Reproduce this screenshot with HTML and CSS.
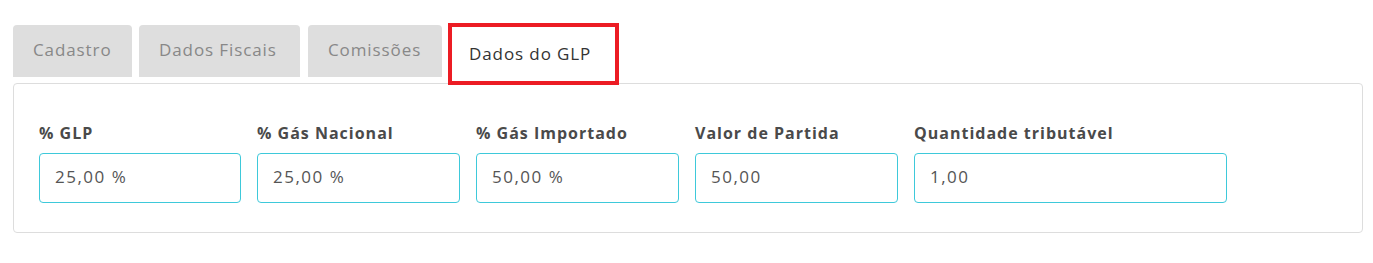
FILE: index.html
```html
<!DOCTYPE html>
<html lang="pt-BR">
<head>
  <meta charset="UTF-8" />
  <title>Dados do GLP</title>
  <link rel="stylesheet" href="styles.css">
</head>
<body>
  <div class="tabs">
    <div class="tab">Cadastro</div>
    <div class="tab">Dados Fiscais</div>
    <div class="tab">Comissões</div>
    <div class="tab active">Dados do GLP</div>
  </div>
  <div class="panel">
    <div class="field first">
      <label>% GLP</label>
      <input class="field-input" type="text" value="25,00 %">
    </div>
    <div class="field">
      <label>% Gás Nacional</label>
      <input class="field-input" type="text" value="25,00 %">
    </div>
    <div class="field">
      <label>% Gás Importado</label>
      <input class="field-input" type="text" value="50,00 %">
    </div>
    <div class="field">
      <label>Valor de Partida</label>
      <input class="field-input" type="text" value="50,00">
    </div>
    <div class="field wide">
      <label>Quantidade tributável</label>
      <input class="field-input" type="text" value="1,00">
    </div>
  </div>
</body>
</html>
```

FILE: styles.css
```css
body {
  margin: 0;
  padding: 25px 10px 0 13px;
  font-family: 'Open Sans', sans-serif;
  background: #fff;
  color: #444;
}
.tabs {
  display: flex;
  align-items: flex-start;
  height: 59px;
}
.tab {
  height: 52px;
  line-height: 50px;
  padding: 0 20px;
  margin-right: 7px;
  background: #dedede;
  color: #888;
  font-size: 17px;
  letter-spacing: 0.9px;
  border-radius: 4px 4px 0 0;
  box-sizing: border-box;
  white-space: nowrap;
}
.tab:nth-child(1) { width: 119px; }
.tab:nth-child(2) { width: 161px; margin-right: 8px; }
.tab:nth-child(3) { width: 134px; margin-right: 6px; }
.tab.active {
  width: 171px;
  height: 62px;
  margin-top: -2px;
  line-height: 54px;
  background: #fff;
  color: #333;
  border: 4px solid #ec1c24;
  border-radius: 0;
  padding: 0 17px;
  position: relative;
  z-index: 1;
}
.panel {
  display: flex;
  gap: 16px;
  padding: 40px 25px 29px;
  border: 1px solid #dddddd;
  border-radius: 4px;
  margin-top: -1px;
}
.field {
  display: flex;
  flex-direction: column;
  width: 203px;
}
.field.first {
  width: 202px;
}
.field.wide {
  width: 313px;
}
.field label {
  font-size: 16px;
  font-weight: 700;
  color: #4a4a4a;
  letter-spacing: 1px;
  margin-bottom: 10px;
  line-height: 19px;
  white-space: nowrap;
}
.field-input {
  height: 50px;
  box-sizing: border-box;
  border: 1px solid #3ec9da;
  border-radius: 4px;
  padding: 0 15px 4px;
  font-family: inherit;
  font-size: 17px;
  letter-spacing: 1.5px;
  color: #555;
  background: #fff;
  outline: none;
}
```
